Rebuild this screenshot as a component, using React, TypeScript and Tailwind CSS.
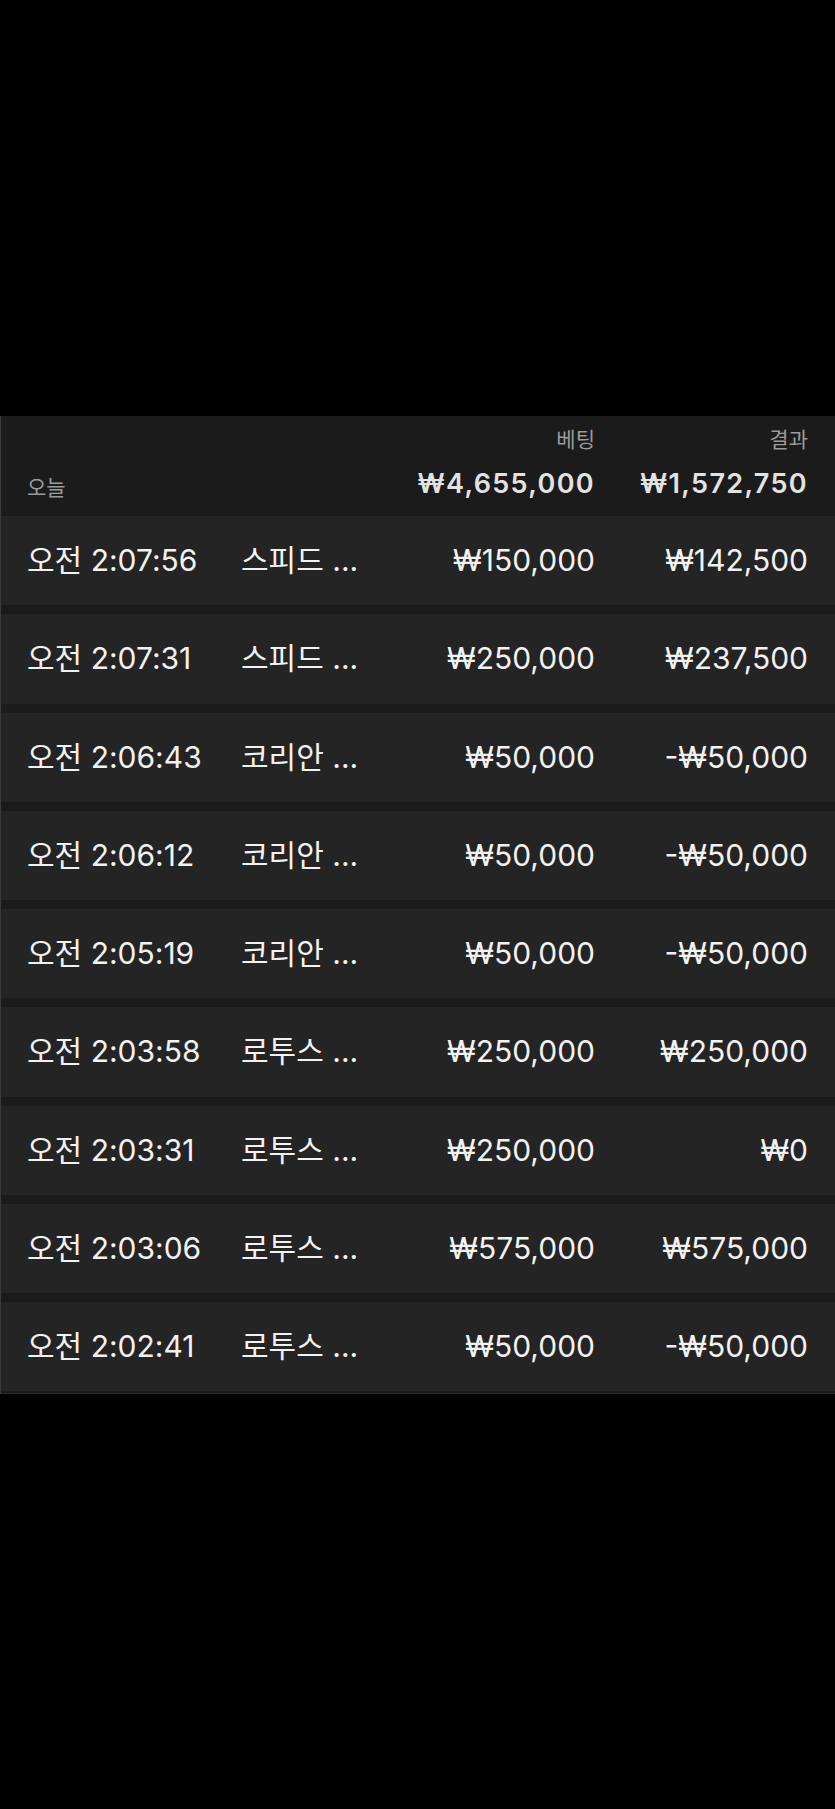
const rows = [
  { time: '오전 2:07:56', game: '스피드 ...', bet: '₩150,000', result: '₩142,500' },
  { time: '오전 2:07:31', game: '스피드 ...', bet: '₩250,000', result: '₩237,500' },
  { time: '오전 2:06:43', game: '코리안 ...', bet: '₩50,000', result: '-₩50,000' },
  { time: '오전 2:06:12', game: '코리안 ...', bet: '₩50,000', result: '-₩50,000' },
  { time: '오전 2:05:19', game: '코리안 ...', bet: '₩50,000', result: '-₩50,000' },
  { time: '오전 2:03:58', game: '로투스 ...', bet: '₩250,000', result: '₩250,000' },
  { time: '오전 2:03:31', game: '로투스 ...', bet: '₩250,000', result: '₩0' },
  { time: '오전 2:03:06', game: '로투스 ...', bet: '₩575,000', result: '₩575,000' },
  { time: '오전 2:02:41', game: '로투스 ...', bet: '₩50,000', result: '-₩50,000' },
];

const font = "font-['Inter','Noto_Sans_CJK_KR',sans-serif]";

export default function App() {
  return (
    <div className={`min-h-screen bg-black pt-[416px] ${font}`}>
      <div className="bg-[#1b1b1b] border-l border-[#3a3a3a] border-b border-b-[#2a2a2a] pb-[2px]">
        {/* Header */}
        <div className="h-[100px] pl-[26px] pr-[27px] pt-[8px] grid grid-cols-[214px_1fr_170px_213px] grid-rows-[30px_1fr] items-center">
          <div className="col-start-3 text-right text-[21px] text-[#9b9b9b] leading-none">베팅</div>
          <div className="col-start-4 text-right text-[21px] text-[#9b9b9b] leading-none">결과</div>
          <div className="col-start-1 text-[21px] text-[#9b9b9b] leading-none pt-[4px]">오늘</div>
          <div className="col-start-3 -ml-[40px] -mt-[4px] text-right text-[27px] font-semibold tracking-[0.05em] text-[#e2e2e2] leading-none whitespace-nowrap">
            ₩4,655,000
          </div>
          <div className="col-start-4 -mt-[4px] text-right text-[27px] font-semibold tracking-[0.05em] text-[#e2e2e2] leading-none whitespace-nowrap">
            ₩1,572,750
          </div>
        </div>

        {/* Rows */}
        <div className="flex flex-col gap-[9px]">
          {rows.map((r) => (
            <div
              key={r.time}
              className="h-[89.25px] pl-[26px] pr-[27px] bg-[#242424] grid grid-cols-[214px_1fr_170px_213px] items-center text-[30px] text-[#f2f2f2] whitespace-nowrap"
            >
              <div>{r.time}</div>
              <div>{r.game}</div>
              <div className="text-right">{r.bet}</div>
              <div className="text-right">{r.result}</div>
            </div>
          ))}
        </div>
      </div>
    </div>
  );
}
